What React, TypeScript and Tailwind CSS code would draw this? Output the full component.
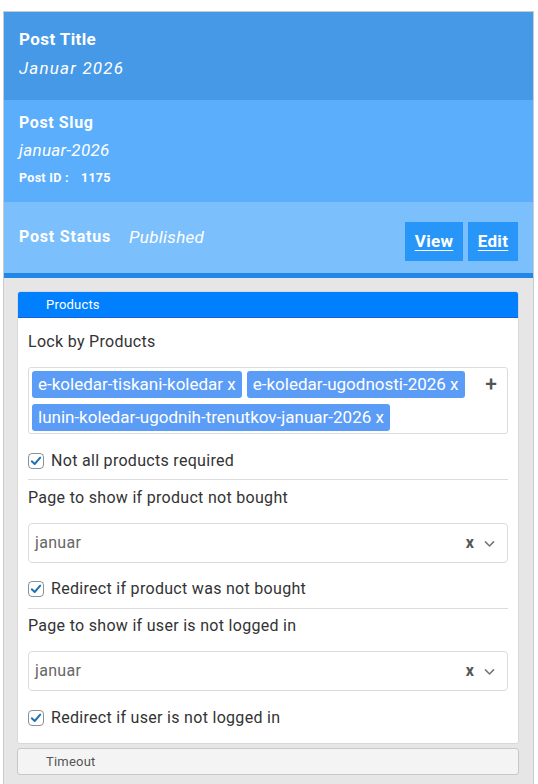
import React from "react";

const font = { fontFamily: "Roboto, 'Open Sans', sans-serif" };

function Check() {
  return (
    <span className="flex h-[16px] w-[16px] shrink-0 items-center justify-center rounded-[4px] border border-[#8c8f94] bg-white">
      <svg viewBox="0 0 16 16" className="h-[14px] w-[14px]">
        <path d="M3.2 8.4 L6.5 11.4 L12.8 4.2" fill="none" stroke="#2271b1" strokeWidth="2.3" strokeLinecap="round" strokeLinejoin="round" />
      </svg>
    </span>
  );
}

function CheckRow({ label }: { label: string }) {
  return (
    <div className="flex h-[24px] items-center gap-[7px] text-[16px] tracking-[0.3px] text-[#333]">
      <Check />
      <span>{label}</span>
    </div>
  );
}

function Tag({ text }: { text: string }) {
  return (
    <span className="flex h-[27px] items-center rounded-[3px] bg-[#5b9cf6] px-[6px] text-[17px] text-white">
      {text} x
    </span>
  );
}

function SelectBox() {
  return (
    <div className="flex h-[40px] items-center rounded-[4px] border border-[#dcdcde] bg-white pl-[6px] pr-[11px]">
      <span className="flex-1 text-[16px] tracking-[0.3px] text-[#666]">januar</span>
      <span className="text-[16px] font-bold text-[#555]">x</span>
      <svg viewBox="0 0 16 16" className="ml-[9px] h-[13px] w-[13px]">
        <path d="M3 6 L8 11 L13 6" fill="none" stroke="#777" strokeWidth="1.9" strokeLinecap="round" strokeLinejoin="round" />
      </svg>
    </div>
  );
}

export default function App() {
  return (
    <div className="h-[784px] w-[538px] overflow-hidden bg-white pl-[3px] pt-[11px]" style={font}>
      <div className="w-[531px] border border-b-0 border-[#c8ccd0] bg-[#e6e6e6]">
        {/* title */}
        <div className="h-[88px] bg-[#4599e6] px-[15px] pt-[15px] text-white">
          <div className="text-[17px] font-bold leading-[24px] tracking-[0.4px]">Post Title</div>
          <div className="mt-[5px] text-[17px] italic leading-[24px] tracking-[1.2px]">Januar 2026</div>
        </div>
        {/* slug */}
        <div className="h-[102px] bg-[#5aaefc] px-[15px] pt-[11px] text-white">
          <div className="text-[16px] font-bold leading-[24px] tracking-[0.6px]">Post Slug</div>
          <div className="mt-[3px] text-[17px] italic leading-[24px] tracking-[0.3px]">januar-2026</div>
          <div className="mt-[8px] text-[12.5px] font-bold leading-[16px] tracking-[0.3px]">
            Post ID :<span className="ml-[12px]">1175</span>
          </div>
        </div>
        {/* status */}
        <div className="flex items-start border-b-[5px] border-[#2186e6] bg-[#7bbffc] px-[15px] text-white" style={{ height: 76 }}>
          <div className="mt-[23px] flex flex-1 items-center leading-[24px]">
            <span className="text-[16px] font-bold tracking-[0.8px]">Post Status</span>
            <span className="ml-[18px] text-[17px] italic tracking-[0.3px]">Published</span>
          </div>
          <div className="mt-[20px] flex gap-[5px]">
            <a className="flex h-[39px] w-[58px] items-center justify-center bg-[#2896f8] text-[17px] font-bold tracking-[0.3px] underline underline-offset-[3px]">View</a>
            <a className="flex h-[39px] w-[50px] items-center justify-center bg-[#2896f8] text-[17px] font-bold tracking-[0.3px] underline underline-offset-[3px]">Edit</a>
          </div>
        </div>
        {/* tabs */}
        <div className="pb-[10px] pl-[13px] pr-[14px] pt-[13px]">
          <div className="overflow-hidden rounded-[3px] border border-[#d8d8d8] bg-white">
            <div className="flex h-[27px] items-center border border-[#1a5fe0] bg-[#0080ff] pl-[28px] text-[13px] tracking-[0.2px] text-white" style={{ margin: -1 }}>
              Products
            </div>
            <div className="px-[10px] pb-[13px] pt-[13px]">
              <div className="text-[16px] leading-[24px] tracking-[0.3px] text-[#333]">Lock by Products</div>
              <div className="mt-[13px] flex h-[67px] items-start rounded-[3px] border border-[#dcdcde] p-[3px]">
                <div className="flex flex-1 flex-wrap gap-x-[5px] gap-y-[6px]">
                  <Tag text="e-koledar-tiskani-koledar" />
                  <Tag text="e-koledar-ugodnosti-2026" />
                  <Tag text="lunin-koledar-ugodnih-trenutkov-januar-2026" />
                </div>
                <span className="mr-[7px] mt-[1px] text-[21px] font-medium leading-[24px] text-[#555]">+</span>
              </div>
              <div className="mt-[15px]">
                <CheckRow label="Not all products required" />
              </div>
              <div className="mt-[6px] border-t border-[#dcdcde]" />
              <div className="mt-[6px] text-[16px] leading-[24px] tracking-[0.3px] text-[#333]">Page to show if product not bought</div>
              <div className="mt-[13px]">
                <SelectBox />
              </div>
              <div className="mt-[14px]">
                <CheckRow label="Redirect if product was not bought" />
              </div>
              <div className="mt-[7px] border-t border-[#dcdcde]" />
              <div className="mt-[5px] text-[16px] leading-[24px] tracking-[0.3px] text-[#333]">Page to show if user is not logged in</div>
              <div className="mt-[13px]">
                <SelectBox />
              </div>
              <div className="mt-[15px]">
                <CheckRow label="Redirect if user is not logged in" />
              </div>
            </div>
          </div>
          <div className="mt-[4px] flex h-[27px] items-center rounded-[3px] border border-[#c8c8c8] bg-[#f4f4f4] pl-[28px] text-[13px] tracking-[0.2px] text-[#555]">
            Timeout
          </div>
        </div>
        <div className="h-[2px] bg-[#2186e6]" />
      </div>
    </div>
  );
}
